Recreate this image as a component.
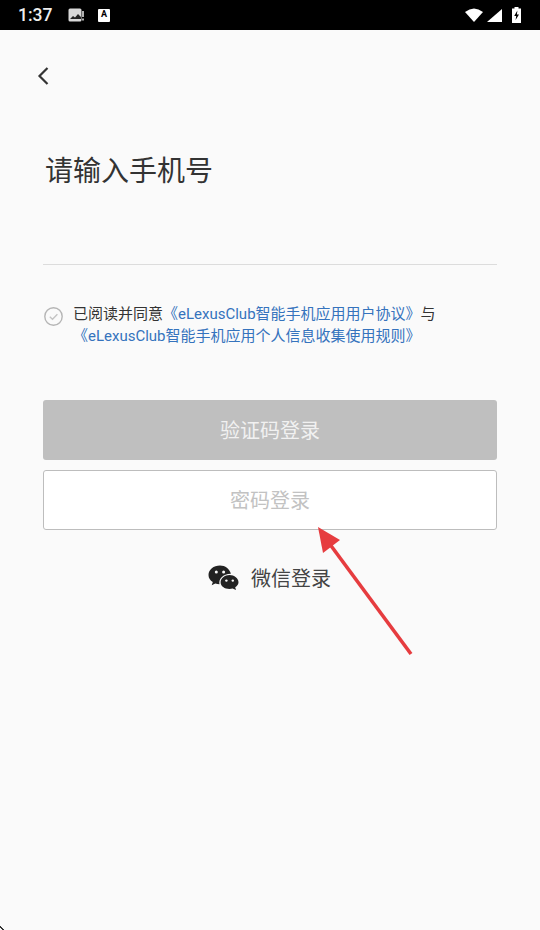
<script>
  const legal = ['《eLexusClub智能手机应用用户协议》', '《eLexusClub智能手机应用个人信息收集使用规则》'];
</script>

<div class="screen">
  <!-- status bar -->
  <div class="status">
    <span class="time">1:37</span>
    <svg class="note-a" width="16" height="14" viewBox="0 0 16 14">
      <rect x="0.5" y="0.5" width="13" height="13" rx="1.5" fill="#d8d8d8"/>
      <path d="M2 11 L5 8 L7 9.5 L10 6 L13 9 V11 Z" fill="#222"/>
      <rect x="14.2" y="3" width="1.6" height="6" fill="#ddd"/>
      <rect x="14.2" y="10.5" width="1.6" height="2" fill="#ddd"/>
    </svg>
    <span class="note-b">A</span>
    <span class="spacer"></span>
    <svg class="wifi" width="18" height="14" viewBox="0 0 18 14">
      <path d="M0 4 Q9 -3 18 4 L9 14 Z" fill="#fff"/>
    </svg>
    <svg class="signal" width="15" height="13" viewBox="0 0 15 13">
      <path d="M0 13 L15 0 V13 Z" fill="#fff"/>
    </svg>
    <svg class="battery" width="9" height="16" viewBox="0 0 9 16">
      <path d="M2.5 0 H6.5 V1.5 H9 V16 H0 V1.5 H2.5 Z" fill="#fff"/>
      <path d="M5.4 3.5 L2.2 9 H4.2 L3.6 13 L7 7.4 H4.9 Z" fill="#000"/>
    </svg>
  </div>

  <div class="body">
    <button class="back" aria-label="返回">
      <svg width="14" height="20" viewBox="0 0 14 20">
        <path d="M11.5 2 L3.5 10 L11.5 18" fill="none" stroke="#333" stroke-width="2.2"/>
      </svg>
    </button>

    <h1>请输入手机号</h1>
    <div class="phone-line"></div>

    <div class="agree">
      <svg class="check" width="19" height="19" viewBox="0 0 19 19">
        <circle cx="9.5" cy="9.5" r="8.7" fill="none" stroke="#b5b5b5" stroke-width="1.4"/>
        <path d="M5.8 9.7 L8.5 12.2 L13.4 7.2" fill="none" stroke="#c4c4c4" stroke-width="1.4"/>
      </svg>
      <p>已阅读并同意<a href="#a">{legal[0]}</a>与<br /><a href="#b">{legal[1]}</a></p>
    </div>

    <button class="btn primary">验证码登录</button>
    <button class="btn secondary">密码登录</button>

    <div class="wechat">
      <svg width="31" height="25" viewBox="0 0 31 25">
        <path d="M12 0.5 C5.6 0.5 0.5 4.7 0.5 9.9 C0.5 12.9 2.2 15.4 4.8 17.1 L3.7 20.2 L7.3 18.4 C8.6 18.9 10.1 19.2 11.5 19.3 C10.4 14.2 14.6 8.9 22.9 8.7 C21.6 4 17.2 0.5 12 0.5 Z" fill="#222"/>
        <circle cx="8.3" cy="7" r="1.5" fill="#fafafa"/>
        <circle cx="15.6" cy="7" r="1.5" fill="#fafafa"/>
        <path d="M21.5 10 C16.6 10 12.6 13.3 12.6 17.3 C12.6 21.3 16.6 24 21.5 24 C22.6 24 23.6 23.8 24.6 23.5 L28 25 L27.2 22.3 C29.2 21 30.5 19.3 30.5 17.3 C30.5 13.3 26.4 10 21.5 10 Z" fill="#222"/>
        <circle cx="18.4" cy="15.6" r="1.2" fill="#fafafa"/>
        <circle cx="24.8" cy="15.6" r="1.2" fill="#fafafa"/>
      </svg>
      <span>微信登录</span>
    </div>
  </div>

  <!-- annotation drawn on top of the screenshot -->
  <svg class="arrow" width="110" height="140" viewBox="0 0 110 140">
    <path d="M99 132 L17 21" stroke="#e63c3f" stroke-width="3.6" fill="none"/>
    <path d="M6 5 L28 18 L11 31 Z" fill="#e63c3f"/>
  </svg>

  <!-- small dark speck in the bottom corner of the capture -->
  <span class="corner"></span>
</div>

<style>
  :global(body) {
    margin: 0;
    background: #fafafa;
  }

  .screen {
    position: relative;
    width: 540px;
    height: 930px;
    overflow: hidden;
    background: #fafafa;
    font-family: Roboto, "Noto Sans CJK SC", sans-serif;
  }

  .status {
    display: flex;
    align-items: center;
    height: 30px;
    background: #000;
    color: #eee;
    padding: 0 19px 0 18px;
    box-sizing: border-box;
  }
  .time {
    font-size: 17.5px;
    font-weight: 500;
    width: 50px;
  }
  .note-b {
    width: 12px;
    height: 13px;
    margin-left: 14px;
    background: #fff;
    color: #000;
    border-radius: 1px;
    font-size: 9px;
    font-weight: 700;
    line-height: 11px;
    text-align: center;
  }
  .spacer {
    flex: 1;
  }
  .signal {
    margin-left: 4px;
  }
  .battery {
    margin-left: 10px;
  }

  .body {
    display: flex;
    flex-direction: column;
    padding: 0 43px;
  }

  .back {
    align-self: flex-start;
    width: 14px;
    height: 20px;
    margin-top: 36px;
    margin-left: -7px;
    padding: 0;
    border: none;
    background: none;
  }
  .back svg {
    display: block;
  }

  h1 {
    margin: 66px 0 0 2px;
    font-size: 28px;
    line-height: 40px;
    font-weight: 400;
    color: #333;
  }

  .phone-line {
    height: 1px;
    margin-top: 72px;
    background: #dcdcdc;
  }

  .agree {
    display: flex;
    margin-top: 38px;
  }
  .check {
    flex: none;
    margin-top: 4px;
    margin-left: 1px;
  }
  .agree p {
    margin: 0 0 0 10px;
    font-size: 15px;
    line-height: 22px;
    color: #333;
    white-space: nowrap;
  }
  .agree a {
    color: #3573bd;
    text-decoration: none;
  }

  .btn {
    display: block;
    width: 100%;
    height: 60px;
    padding: 0 0 2px;
    border-radius: 3px;
    font-family: inherit;
    font-size: 20px;
    box-sizing: border-box;
  }
  .primary {
    margin-top: 53px;
    border: none;
    background: #bfbfbf;
    color: #f1f1f1;
  }
  .secondary {
    margin-top: 10px;
    border: 1px solid #bdbdbd;
    background: #fff;
    color: #c2c2c2;
  }

  .wechat {
    display: flex;
    align-items: center;
    justify-content: center;
    gap: 12px;
    margin-top: 33px;
    padding-right: 1px;
    font-size: 20px;
    color: #444;
  }

  .arrow {
    position: absolute;
    left: 312px;
    top: 522px;
  }

  .corner {
    position: absolute;
    left: 0;
    bottom: 0;
    width: 4px;
    height: 4px;
    background: linear-gradient(45deg, transparent 35%, #333 35%, #333 60%, transparent 60%);
  }
</style>
